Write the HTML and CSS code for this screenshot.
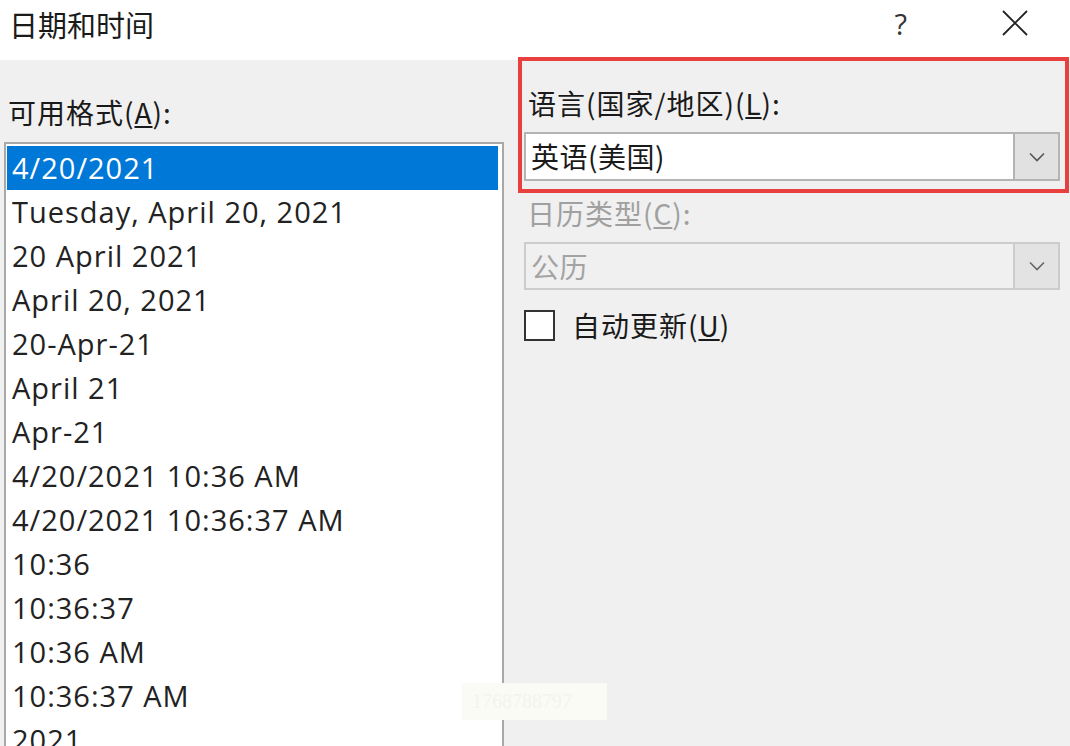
FILE: index.html
```html
<!DOCTYPE html>
<html lang="zh-CN">
  <head>
    <meta charset="UTF-8" />
    <meta name="viewport" content="width=device-width, initial-scale=1.0" />
    <title>日期和时间</title>
    <link rel="stylesheet" href="styles.css">
  </head>

  <body>
    <div class="titlebar">
      <span class="title">日期和时间</span>
      <div class="controls">
        <span class="help">?</span>
        <svg class="close" width="26" height="26" viewBox="0 0 26 26">
          <path d="M1 1 L25 25 M25 1 L1 25" stroke="#222" stroke-width="1.8" fill="none" />
        </svg>
      </div>
    </div>

    <div class="content">
      <!-- 左侧：可用格式列表 -->
      <div class="formats">
        <div class="label">可用格式(<u>A</u>):</div>
        <ul class="listbox">
          <li class="selected">4/20/2021</li>
          <li>Tuesday, April 20, 2021</li>
          <li>20 April 2021</li>
          <li>April 20, 2021</li>
          <li>20-Apr-21</li>
          <li>April 21</li>
          <li>Apr-21</li>
          <li>4/20/2021 10:36 AM</li>
          <li>4/20/2021 10:36:37 AM</li>
          <li>10:36</li>
          <li>10:36:37</li>
          <li>10:36 AM</li>
          <li>10:36:37 AM</li>
          <li>2021</li>
        </ul>
      </div>

      <!-- 右侧：语言与日历 -->
      <div class="options">
        <div class="highlight">
          <div class="label">语言(国家/地区)(<u>L</u>):</div>
          <div class="combo">
            <span class="value">英语(美国)</span>
            <span class="drop">
              <svg width="16" height="10" viewBox="0 0 16 10">
                <path d="M1 1.5 L8 8.5 L15 1.5" stroke="#555" stroke-width="1.6" fill="none" />
              </svg>
            </span>
          </div>
        </div>

        <div class="field">
          <div class="label disabled">日历类型(<u>C</u>):</div>
          <div class="combo off">
            <span class="value">公历</span>
            <span class="drop">
              <svg width="16" height="10" viewBox="0 0 16 10">
                <path d="M1 1.5 L8 8.5 L15 1.5" stroke="#666" stroke-width="1.6" fill="none" />
              </svg>
            </span>
          </div>
          <div class="check">
            <span class="box"></span>
            <span>自动更新(<u>U</u>)</span>
          </div>
        </div>
      </div>
    </div>

    <div class="watermark">1768788797</div>
  </body>
</html>
```

FILE: styles.css
```css
body {
  margin: 0;
  width: 1070px;
  height: 746px;
  overflow: hidden;
  background-color: #f0f0f0;
  font-family: "Noto Sans CJK SC", "Open Sans", sans-serif;
  color: #1a1a1a;
  position: relative;
}

.titlebar {
  height: 60px;
  background-color: #fff;
  display: flex;
  align-items: center;
  justify-content: space-between;
  padding: 0 42px 0 9px;
}

.title {
  font-size: 29px;
  line-height: 40px;
  margin-top: -12px;
}

.controls {
  display: flex;
  align-items: center;
  gap: 95px;
  margin-top: -14px;
}

.help {
  font-family: "Open Sans", sans-serif;
  font-size: 29px;
  color: #333;
}

.content {
  display: flex;
}

.formats {
  width: 500px;
  padding: 32px 0 0 4px;
}

.label {
  font-size: 28px;
  letter-spacing: 1px;
  line-height: 40px;
  padding-left: 4px;
}

.formats .label {
  margin-bottom: 10px;
}

.listbox {
  list-style: none;
  margin: 0;
  padding: 2px 4px 0 1px;
  border: 2px solid #a8a8a8;
  background-color: #fff;
  height: 640px;
  box-sizing: border-box;
  overflow: hidden;
}

.listbox li {
  height: 44px;
  line-height: 44px;
  padding-left: 5px;
  font-family: "Open Sans", sans-serif;
  font-size: 29px;
  letter-spacing: 1px;
  color: #222;
  white-space: nowrap;
}

.listbox li.selected {
  background-color: #0078d7;
  color: #fff;
}

.options {
  margin-left: 14px;
  width: 551px;
}

.highlight {
  margin-top: -3px;
  border: 4px solid #e8403f;
  padding: 22px 5px 8px 2px;
}

.highlight .combo {
  margin-top: 9px;
}

.combo {
  display: flex;
  height: 49px;
  border: 2px solid #b4b4b4;
  background-color: #fff;
  box-sizing: border-box;
}

.combo .value {
  flex: 1;
  font-size: 28px;
  letter-spacing: 0.5px;
  line-height: 45px;
  padding-left: 5px;
}

.combo .drop {
  width: 43px;
  background-color: #e1e1e1;
  border-left: 2px solid #b4b4b4;
  display: flex;
  align-items: center;
  justify-content: center;
}

.field {
  padding: 0 9px 0 6px;
}

.label.disabled {
  color: #a0a0a0;
  padding-left: 3px;
}

.combo.off {
  margin-top: 9px;
  height: 48px;
  background-color: #f0f0f0;
  border-color: #cccccc;
}

.combo.off .value {
  color: #a3a3a3;
}

.combo.off .drop {
  background-color: #e3e3e3;
  border-left-color: #cccccc;
}

.check {
  display: flex;
  align-items: center;
  gap: 17px;
  margin-top: 16px;
  height: 38px;
  font-size: 28px;
  letter-spacing: 1px;
}

.check .box {
  width: 31px;
  height: 31px;
  box-sizing: border-box;
  border: 2px solid #333;
  background-color: #fff;
}

.watermark {
  position: absolute;
  left: 462px;
  top: 683px;
  width: 145px;
  height: 37px;
  background-color: #fbfbf6;
  color: #f3f3ee;
  font-family: "Liberation Serif", serif;
  font-size: 20px;
  line-height: 37px;
  padding-left: 10px;
  box-sizing: border-box;
}
```
